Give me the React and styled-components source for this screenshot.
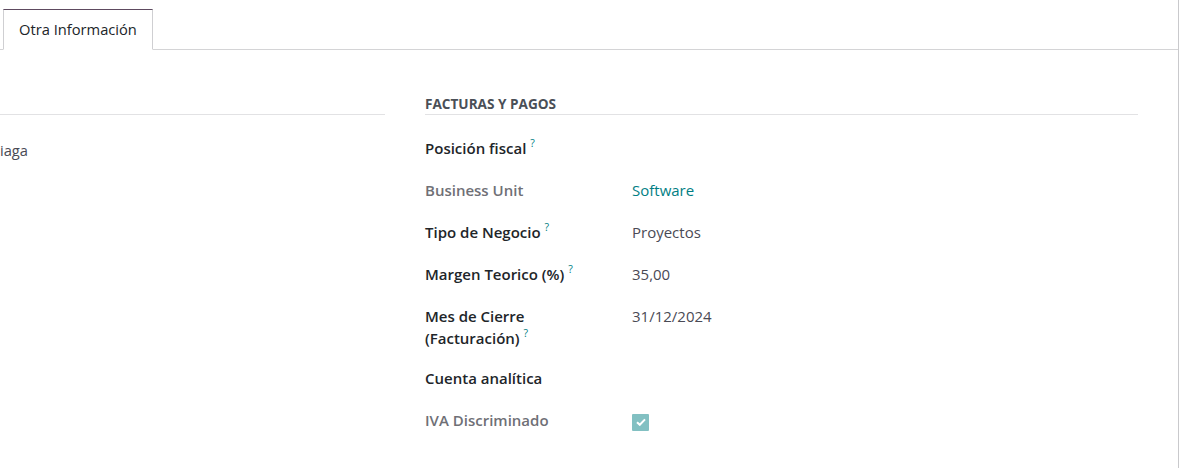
import React from "react";
import styled, { createGlobalStyle } from "styled-components";

const GlobalStyle = createGlobalStyle`
  html, body {
    margin: 0;
    padding: 0;
    background: #ffffff;
  }
  body {
    font-family: "Open Sans", "Noto Sans", sans-serif;
    font-size: 14.7px;
    color: #212529;
  }
`;

const Sheet = styled.div`
  width: 1178px;
  height: 468px;
  border-right: 1px solid #c9c9cc;
  box-sizing: content-box;
  overflow: hidden;
`;

const TabBar = styled.div`
  display: flex;
  padding: 9px 0 0 3px;
  border-bottom: 1px solid #d4d4d6;
  height: 40px;
`;

const Tab = styled.div`
  display: flex;
  align-items: center;
  padding: 0 15px 1px;
  margin-bottom: -1px;
  background: #fff;
  border: 1px solid #cfcfd2;
  border-top: 1px solid #5e4a60;
  border-bottom: 1px solid #fff;
  color: #212529;
  font-size: 14.7px;
`;

const Columns = styled.div`
  display: grid;
  grid-template-columns: 385px 713px;
  column-gap: 40px;
  padding-top: 45px;
`;

const Group = styled.div`
  display: flex;
  flex-direction: column;
`;

const GroupTitle = styled.div`
  height: 19px;
  border-bottom: 1px solid #e2e2e4;
  font-size: 13.6px;
  font-weight: 700;
  color: #4a4f57;
  text-transform: uppercase;
  line-height: 18px;
  margin-bottom: 22px;
`;

const Row = styled.div`
  display: grid;
  grid-template-columns: 207px 1fr;
  line-height: 22px;
  min-height: 24px;
  padding-bottom: 18px;
`;

const Label = styled.div`
  font-size: 15px;
  font-weight: 600;
  color: ${(p) => (p.$muted ? "#6f7076" : "#212529")};
  padding-right: 10px;
`;

const Help = styled.sup`
  color: #017e84;
  font-size: 10.5px;
  font-weight: 400;
  margin-left: 4px;
  vertical-align: top;
  position: relative;
  top: -5px;
`;

const Value = styled.div`
  font-size: 15px;
  color: ${(p) => (p.$link ? "#017e84" : "#4a4a55")};
`;

const LeftText = styled.div`
  color: #4a4a55;
  margin-top: 3px;
`;

const Check = styled.span`
  display: inline-flex;
  align-items: center;
  justify-content: center;
  width: 17px;
  height: 17px;
  background: #82c0c2;
  border-radius: 1px;
`;

const rows = [
  { label: "Posición fiscal", help: true },
  { label: "Business Unit", muted: true, value: "Software", link: true },
  { label: "Tipo de Negocio", help: true, value: "Proyectos" },
  { label: "Margen Teorico (%)", help: true, value: "35,00" },
  { label: <>Mes de Cierre<br />(Facturación)</>, help: true, value: "31/12/2024" },
  { label: "Cuenta analítica" },
  { label: "IVA Discriminado", muted: true, check: true },
];

export default function App() {
  return (
    <>
      <GlobalStyle />
      <Sheet>
        <TabBar>
          <Tab>Otra Información</Tab>
        </TabBar>
        <Columns>
          <Group>
            <GroupTitle />
            <LeftText>iaga</LeftText>
          </Group>
          <Group>
            <GroupTitle>Facturas y pagos</GroupTitle>
            {rows.map((r, i) => (
              <Row key={i}>
                <Label $muted={r.muted}>
                  {r.label}
                  {r.help && <Help>?</Help>}
                </Label>
                <Value $link={r.link}>
                  {r.check ? (
                    <Check>
                      <svg width="10" height="8" viewBox="0 0 10 8">
                        <path d="M1 4.2 L3.8 6.8 L9 1.4" fill="none" stroke="#fff" strokeWidth="2" />
                      </svg>
                    </Check>
                  ) : (
                    r.value
                  )}
                </Value>
              </Row>
            ))}
          </Group>
        </Columns>
      </Sheet>
    </>
  );
}
